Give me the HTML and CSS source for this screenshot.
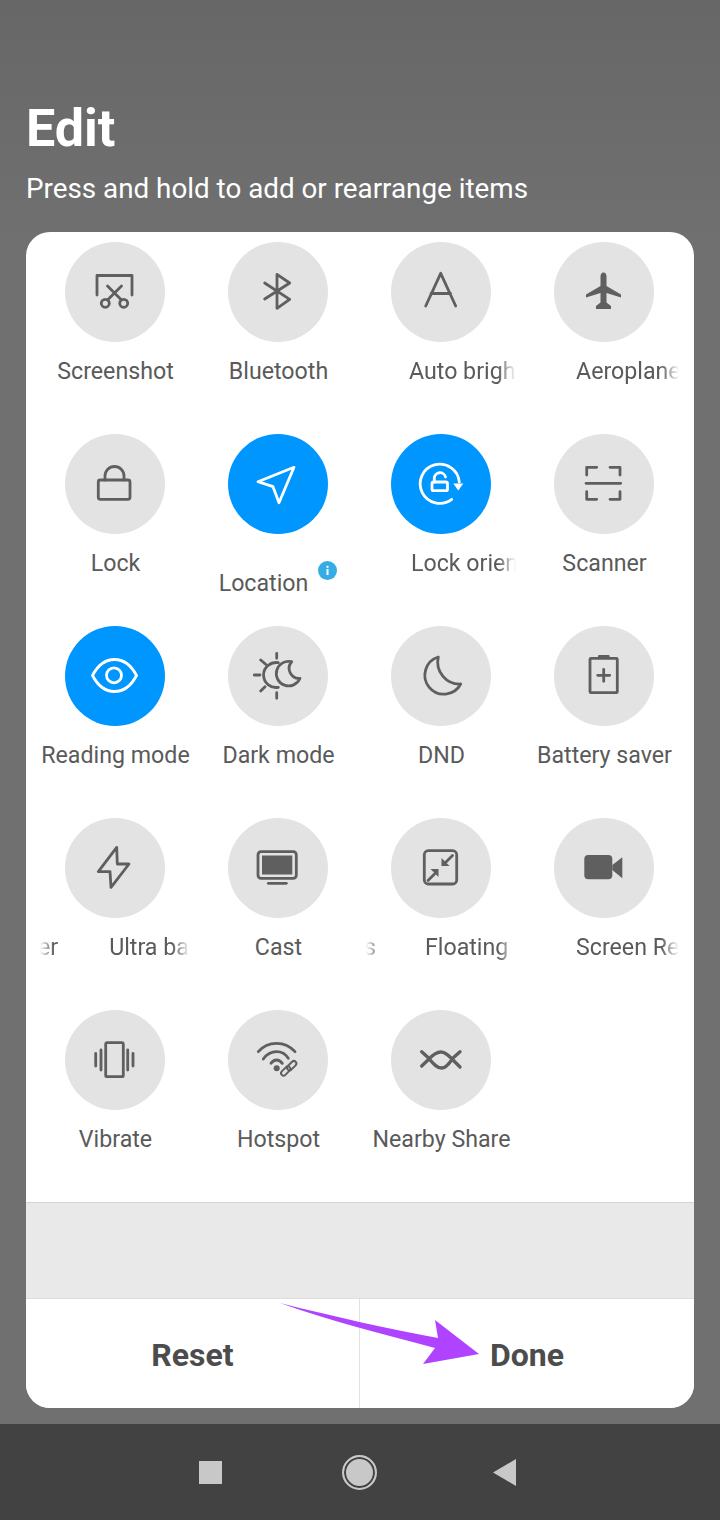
FILE: index.html
```html
<!DOCTYPE html>
<html lang="en">
<head>
    <meta charset="UTF-8">
    <meta name="viewport" content="width=device-width, initial-scale=1.0">
    <title>Edit quick settings</title>
    <link rel="stylesheet" href="styles.css">
</head>
<body>
    <header class="page-head">
        <h1>Edit</h1>
        <p>Press and hold to add or rearrange items</p>
    </header>

    <main class="card">
        <div class="tiles">
            <div class="tile">
                <div class="circle">
                    <svg viewBox="0 0 100 100"><path d="M32 53V33.5H67V53"/><circle cx="40.3" cy="61.3" r="4"/><circle cx="58.7" cy="61.3" r="4"/><path d="M42.5 44L56.5 58M56.5 44L42.5 58"/></svg>
                </div>
                <div class="label">Screenshot</div>
            </div>
            <div class="tile">
                <div class="circle">
                    <svg viewBox="0 0 100 100"><path d="M36.7 41L61.7 57.3L49 66.3V32.3L61.7 41L36.7 57"/></svg>
                </div>
                <div class="label">Bluetooth</div>
            </div>
            <div class="tile">
                <div class="circle">
                    <svg viewBox="0 0 100 100"><path d="M34.7 64L49.7 31.3L64.7 64M40 51.5H59.5"/></svg>
                </div>
                <div class="label marquee m-43"><span>Auto brightness</span></div>
            </div>
            <div class="tile">
                <div class="circle">
                    <svg viewBox="0 0 100 100"><path class="solid" d="M49.5 30.5C47.5 30.5 46.5 32.5 46.5 34.5V44L32 52.5V55.5L46.5 51V60.5L42 64V67H57V64L52.5 60.5V51L67 55.5V52.5L52.5 44V34.5C52.5 32.5 51.5 30.5 49.5 30.5Z"/></svg>
                </div>
                <div class="label marquee m-47"><span>Aeroplane mode</span></div>
            </div>

            <div class="tile">
                <div class="circle">
                    <svg viewBox="0 0 100 100"><rect x="33.3" y="46" width="31.7" height="19.3" rx="2"/><path d="M40 46V42A9.5 9.5 0 0 1 59 42V46"/></svg>
                </div>
                <div class="label">Lock</div>
            </div>
            <div class="tile">
                <div class="circle on">
                    <svg viewBox="0 0 100 100"><path d="M66 33.3L30 47.7L45 52.7L51 68.7Z"/></svg>
                </div>
                <div class="label label-info">
                    <span>Location</span>
                    <svg class="info" viewBox="0 0 19 19"><circle cx="9.5" cy="9.5" r="9.5"/><rect x="8.5" y="8" width="2" height="6"/><rect x="8.5" y="4.8" width="2" height="2"/></svg>
                </div>
            </div>
            <div class="tile">
                <div class="circle on">
                    <svg viewBox="0 0 100 100"><path d="M60.7 65.3A19.6 19.6 0 1 1 68.3 48"/><path class="solid" d="M62.3 49.5H72.3L67.3 56.5Z"/><rect x="41" y="48" width="15.5" height="8.7" rx="1.5"/><path d="M43.3 48V44A5.7 5.7 0 0 1 54.5 43"/></svg>
                </div>
                <div class="label marquee m-45"><span>Lock orientation</span></div>
            </div>
            <div class="tile">
                <div class="circle">
                    <svg viewBox="0 0 100 100"><path d="M32.7 41V33.3H42.7M56 33.3H66V41M32.7 57.7V65.3H42.7M56 65.3H66V57.7M32 49.3H66.7"/></svg>
                </div>
                <div class="label">Scanner</div>
            </div>

            <div class="tile">
                <div class="circle on">
                    <svg viewBox="0 0 100 100"><path d="M27.5 49.5C33 39 41 33.5 49.5 33.5S66 39 71.5 49.5C66 60 58 65.5 49.5 65.5S33 60 27.5 49.5Z"/><circle cx="49" cy="49.3" r="7.5"/></svg>
                </div>
                <div class="label">Reading mode</div>
            </div>
            <div class="tile">
                <div class="circle">
                    <svg viewBox="0 0 100 100"><path d="M50.3 36.7A12.5 12.5 0 1 0 50.3 61.3M48.7 27.3V32.3M26.3 49H32M48.7 66.7V72.3M32.7 34L37.7 38.3M32.7 65L37 60.7"/><path d="M63.7 35.7A12.3 12.3 0 1 0 72 52.3A10 10 0 0 1 63.7 35.7Z"/></svg>
                </div>
                <div class="label">Dark mode</div>
            </div>
            <div class="tile">
                <div class="circle">
                    <svg viewBox="0 0 100 100"><path d="M47.3 31A19 19 0 1 0 69.7 58A22 22 0 0 1 47.3 31Z"/></svg>
                </div>
                <div class="label">DND</div>
            </div>
            <div class="tile">
                <div class="circle">
                    <svg viewBox="0 0 100 100"><rect x="36" y="32.3" width="27.3" height="34.4" rx="1"/><path d="M45.3 30.5H54.3M43.7 49.3H55.7M49.7 43.3V55.3"/></svg>
                </div>
                <div class="label">Battery saver</div>
            </div>

            <div class="tile">
                <div class="circle">
                    <svg viewBox="0 0 100 100"><path d="M51.7 29.3L33.3 53.7H45L46 69.3L64 46H52.3Z"/></svg>
                </div>
                <div class="label marquee"><span class="tail">er</span><span>Ultra battery saver</span></div>
            </div>
            <div class="tile">
                <div class="circle">
                    <svg viewBox="0 0 100 100"><rect x="30" y="33.7" width="38.3" height="26.6" rx="3"/><rect class="solid" x="34" y="37.5" width="30.3" height="19"/><path d="M40.3 65.3H58.3"/></svg>
                </div>
                <div class="label">Cast</div>
            </div>
            <div class="tile">
                <div class="circle">
                    <svg viewBox="0 0 100 100"><rect x="33.3" y="32.7" width="32.4" height="33.3" rx="4"/><path d="M61.5 37.5L54 45M37 62.5L44 55.5"/><path class="solid" d="M50.5 48V40L58.5 48ZM47.5 51V59L39.5 51Z"/></svg>
                </div>
                <div class="label marquee"><span class="tail tail-short">s</span><span>Floating window</span></div>
            </div>
            <div class="tile">
                <div class="circle">
                    <svg viewBox="0 0 100 100"><rect class="solid" x="30.3" y="37" width="28" height="24.3" rx="4"/><path class="solid" d="M58.3 47L68.3 39.3V60.3L58.3 52Z"/></svg>
                </div>
                <div class="label marquee m-47"><span>Screen Record</span></div>
            </div>

            <div class="tile">
                <div class="circle">
                    <svg viewBox="0 0 100 100"><rect x="40.7" y="32.7" width="17.6" height="34" rx="1.5"/><path d="M36 40V60M30.7 43.3V56M62.7 40V60M68 43.3V56"/></svg>
                </div>
                <div class="label">Vibrate</div>
            </div>
            <div class="tile">
                <div class="circle">
                    <svg viewBox="0 0 100 100"><path d="M30.3 41.7C35 36 41.5 33.3 48.7 33.3S62 36 67 41.7M35.3 49C38.5 44.5 43 41.7 48.7 41.7S57.5 44 60.3 48.3M43 53.3C44.5 51 46.5 50 48.7 50S52.5 51 54.3 53.3"/><circle class="solid" cx="48.7" cy="58.3" r="3"/><rect class="thin" x="52.2" y="58.5" width="11" height="5" rx="2.5" transform="rotate(-45 57.7 61)"/><rect class="thin" x="58.2" y="53.2" width="11" height="5" rx="2.5" transform="rotate(-45 63.7 55.7)"/></svg>
                </div>
                <div class="label">Hotspot</div>
            </div>
            <div class="tile">
                <div class="circle">
                    <svg class="heavy" viewBox="0 0 100 100"><path d="M30.7 56L37 50C41 45.5 45 42 50 42C55 42 58 46 62 50L69 57M30.7 41.7L37 47.5C41 52 45 58 50.5 58C56 58 59 52 62 48L69 41.7"/></svg>
                </div>
                <div class="label">Nearby Share</div>
            </div>
        </div>

        <div class="spare"></div>

        <div class="actions">
            <button type="button">Reset</button>
            <button type="button">Done</button>
        </div>
    </main>

    <nav class="nav-bar">
        <span class="nav-square"></span>
        <span class="nav-home"></span>
        <svg class="nav-back" viewBox="0 0 23 27"><path d="M0 13.5L23 0V27Z"/></svg>
    </nav>

    <svg class="arrow" viewBox="0 0 210 70"><path d="M0 0C55 14 110 26 158 35L155 17L199 51L143 61L155 45C100 30 50 18 0 0Z"/></svg>
</body>
</html>
```

FILE: styles.css
```css
* {
    box-sizing: border-box;
}

body {
    position: relative;
    width: 720px;
    height: 1520px;
    margin: 0;
    overflow: hidden;
    display: flex;
    flex-direction: column;
    font-family: Roboto, "Liberation Sans", sans-serif;
    background: linear-gradient(#676767, #707070 16%);
}

.page-head {
    height: 232px;
    padding: 100px 26px 0;
    color: #fff;
}

.page-head h1 {
    margin: 0;
    font-size: 52px;
    line-height: 58px;
    font-weight: 700;
}

.page-head p {
    margin: 13px 0 0;
    font-size: 27.8px;
    line-height: 36px;
}

.card {
    width: 668px;
    height: 1176px;
    margin-left: 26px;
    background: #fff;
    border-radius: 24px;
    overflow: hidden;
    display: flex;
    flex-direction: column;
}

.tiles {
    display: grid;
    grid-template-columns: repeat(4, 163px);
    grid-auto-rows: 192px;
    padding: 10px 0 0 7.5px;
    height: 970px;
}

.tile {
    display: flex;
    flex-direction: column;
    align-items: center;
}

.circle {
    width: 100px;
    height: 100px;
    flex: none;
    border-radius: 50%;
    background: #e3e3e3;
}

.circle svg {
    display: block;
    width: 100px;
    height: 100px;
    fill: none;
    stroke: #5f5f5f;
    stroke-width: 2.8;
    stroke-linejoin: round;
    stroke-linecap: round;
}

.circle svg.heavy {
    stroke-width: 3.3;
}

.circle svg .solid {
    fill: #5f5f5f;
    stroke: none;
}

.circle svg .thin {
    stroke-width: 2;
}

.circle.on {
    background: #0096ff;
}

.circle.on svg {
    stroke: #fff;
}

.circle.on svg .solid {
    fill: #fff;
}

.label {
    margin-top: 14px;
    padding-left: 1px;
    font-size: 23.2px;
    line-height: 30px;
    color: #5a5a5a;
    white-space: nowrap;
}

.label-info {
    display: flex;
    align-items: center;
    gap: 10px;
    margin-top: 27px;
    padding-left: 0;
}

.info {
    width: 19px;
    height: 19px;
    margin-bottom: 24px;
}

.info circle {
    fill: #35ade4;
}

.info rect {
    fill: #fff;
}

/* labels that were caught mid-scroll */
.marquee {
    width: 150px;
    padding-left: 0;
    display: flex;
    overflow: hidden;
    -webkit-mask-image: linear-gradient(to right, transparent, #000 14px, #000 132px, transparent);
    mask-image: linear-gradient(to right, transparent, #000 14px, #000 132px, transparent);
}

.marquee span {
    flex: none;
}

.marquee .tail {
    margin: 0 51px 0 -2px;
}

.marquee .tail-short {
    margin-right: 49px;
}

.m-43 {
    padding-left: 43px;
}

.m-45 {
    padding-left: 45px;
}

.m-47 {
    padding-left: 47px;
}

.spare {
    height: 97px;
    background: #e9e9e9;
    border-top: 1px solid #d4d4d4;
    border-bottom: 1px solid #dedede;
}

.actions {
    flex: 1;
    display: grid;
    grid-template-columns: 334px 1fr;
}

.actions button {
    border: none;
    background: #fff;
    font-family: inherit;
    font-size: 32px;
    font-weight: 700;
    color: #4c4c4c;
    padding: 2px 0 0;
}

.actions button:first-child {
    border-right: 1px solid #e2e2e2;
}

.nav-bar {
    height: 96px;
    margin-top: 16px;
    background: #424242;
    display: flex;
    align-items: center;
    justify-content: center;
    gap: 120px;
    padding-right: 5px;
}

.nav-square {
    width: 23px;
    height: 23px;
    background: #c8c8c8;
}

.nav-home {
    width: 35px;
    height: 35px;
    border-radius: 50%;
    background: #c8c8c8;
    border: 2px solid #c8c8c8;
    box-shadow: inset 0 0 0 2px #424242;
}

.nav-back {
    width: 23px;
    height: 27px;
    margin-left: -4px;
    fill: #c8c8c8;
}

.arrow {
    position: absolute;
    left: 280px;
    top: 1303px;
    width: 210px;
    height: 70px;
    fill: #b043ff;
}
```
